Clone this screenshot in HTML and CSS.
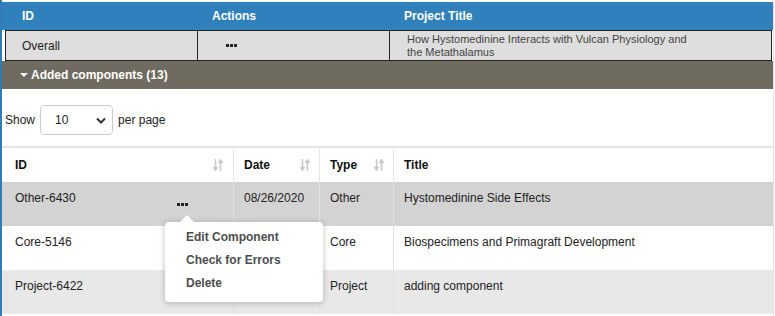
FILE: index.html
```html
<!DOCTYPE html>
<html lang="en">
<head>
    <meta charset="UTF-8">
    <title>Components</title>
    <link rel="stylesheet" href="styles.css">
</head>
<body>
    <div class="page">
        <div class="summary-head">
            <div class="head-cell">ID</div>
            <div class="head-cell">Actions</div>
            <div class="head-cell">Project Title</div>
        </div>
        <div class="summary-row">
            <div class="sum-cell">Overall</div>
            <div class="sum-cell sum-actions"><span class="dots"><i></i><i></i><i></i></span></div>
            <div class="sum-cell sum-title">How Hystomedinine Interacts with Vulcan Physiology and<br>the Metathalamus</div>
        </div>
        <div class="band"><span class="caret"></span>Added components (13)</div>

        <div class="length">
            <span>Show</span>
            <div class="select">
                <span>10</span>
                <svg width="10" height="7" viewBox="0 0 10 7"><path d="M1 1.5 L5 5.5 L9 1.5" fill="none" stroke="#333" stroke-width="2"/></svg>
            </div>
            <span>per page</span>
        </div>

        <table class="grid">
            <thead>
                <tr>
                    <th class="col-id"><div class="th-in">ID<svg class="sort" width="10" height="12" viewBox="0 0 10 12"><path d="M2.5 0 V10 M0.5 8 L2.5 11 L4.5 8 M7.5 12 V2 M5.5 4 L7.5 1 L9.5 4" fill="none" stroke="#c9c9c9" stroke-width="1.6"/></svg></div></th>
                    <th class="col-date"><div class="th-in">Date<svg class="sort" width="10" height="12" viewBox="0 0 10 12"><path d="M2.5 0 V10 M0.5 8 L2.5 11 L4.5 8 M7.5 12 V2 M5.5 4 L7.5 1 L9.5 4" fill="none" stroke="#c9c9c9" stroke-width="1.6"/></svg></div></th>
                    <th class="col-type"><div class="th-in">Type<svg class="sort" width="10" height="12" viewBox="0 0 10 12"><path d="M2.5 0 V10 M0.5 8 L2.5 11 L4.5 8 M7.5 12 V2 M5.5 4 L7.5 1 L9.5 4" fill="none" stroke="#c9c9c9" stroke-width="1.6"/></svg></div></th>
                    <th class="col-title"><div class="th-in">Title</div></th>
                </tr>
            </thead>
            <tbody>
                <tr class="row-hover">
                    <td>
                        <div class="id-cell">
                            <span>Other-6430</span>
                            <span class="dots-btn">
                                <span class="dots"><i></i><i></i><i></i></span>
                                <div class="popover">
                                    <div class="pop-item">Edit Component</div>
                                    <div class="pop-item">Check for Errors</div>
                                    <div class="pop-item">Delete</div>
                                </div>
                            </span>
                        </div>
                    </td>
                    <td>08/26/2020</td>
                    <td>Other</td>
                    <td>Hystomedinine Side Effects</td>
                </tr>
                <tr>
                    <td>Core-5146</td>
                    <td></td>
                    <td>Core</td>
                    <td>Biospecimens and Primagraft Development</td>
                </tr>
                <tr class="row-alt">
                    <td>Project-6422</td>
                    <td></td>
                    <td>Project</td>
                    <td>adding component</td>
                </tr>
            </tbody>
        </table>
    </div>
</body>
</html>
```

FILE: styles.css
```css
body {
    margin: 0;
    font-family: 'Liberation Sans', Arial, sans-serif;
    font-size: 12px;
    color: #222;
    background-color: #fff;
    overflow: hidden;
}
.page {
    width: 771px;
    min-height: 316px;
    padding-top: 2px;
    border-left: 2px solid #2f7cb6;
    border-right: 1px solid #e2e2e2;
}
.summary-head {
    display: grid;
    grid-template-columns: 195px 192px 1fr;
    height: 28px;
    align-items: center;
    background-color: #3080bc;
    color: #fff;
    font-weight: bold;
}
.head-cell {
    padding-left: 15px;
}
.head-cell:first-child {
    padding-left: 20px;
}
.summary-row {
    display: grid;
    grid-template-columns: 192px 192px 1fr;
    height: 31px;
    box-sizing: border-box;
    margin-left: 3px;
    margin-right: 1px;
    background-color: #dedede;
    border-top: 1px solid #222;
    border-bottom: 1px solid #222;
}
.sum-cell {
    display: flex;
    align-items: center;
    border-left: 1px solid #222;
    padding-left: 16px;
}
.sum-cell:last-child {
    border-right: 1px solid #222;
}
.sum-actions {
    padding-left: 28px;
}
.sum-title {
    display: block;
    padding: 2px 0 0 17px;
    font-size: 11px;
    line-height: 13px;
    color: #444;
}
.dots {
    display: inline-flex;
    gap: 1px;
}
.dots i {
    display: block;
    width: 3px;
    height: 3px;
    background-color: #222;
}
.band {
    height: 28px;
    display: flex;
    align-items: center;
    padding-left: 18px;
    background-color: #6f6b60;
    color: #fff;
    font-weight: bold;
}
.caret {
    display: inline-block;
    width: 0;
    height: 0;
    border-left: 4px solid transparent;
    border-right: 4px solid transparent;
    border-top: 4px solid #fff;
    margin-right: 3px;
}
.length {
    display: flex;
    align-items: center;
    gap: 5px;
    margin-top: 16px;
    padding-left: 3px;
}
.select {
    width: 73px;
    height: 30px;
    box-sizing: border-box;
    border: 1px solid #ccc;
    border-radius: 4px;
    display: flex;
    align-items: center;
    justify-content: space-between;
    padding: 0 6px 0 14px;
}
.grid {
    width: 100%;
    margin-top: 11px;
    border-collapse: collapse;
    border-top: 2px solid #e4e4e4;
}
.grid th {
    height: 34px;
    padding: 0;
    text-align: left;
    font-weight: bold;
    color: #111;
    border-left: 1px solid #e6e6e6;
}
.grid th:first-child,
.grid td:first-child {
    border-left: none;
}
.th-in {
    display: flex;
    align-items: center;
    justify-content: space-between;
    padding: 0 9px 0 10px;
}
.col-id .th-in {
    padding-left: 13px;
    padding-right: 10px;
}
.col-id {
    width: 231px;
}
.col-date {
    width: 85px;
}
.col-type {
    width: 73px;
}
.grid td {
    height: 44px;
    box-sizing: border-box;
    padding: 9px 10px 0;
    vertical-align: top;
    border-left: 1px solid #e2e2e2;
    line-height: 14px;
}
.grid td:first-child {
    padding-left: 13px;
}
.row-hover td {
    background-color: #d3d3d3;
}
.row-alt td {
    background-color: #e8e8e8;
}
.id-cell {
    display: flex;
    height: 14px;
}
.dots-btn {
    position: relative;
    margin-left: auto;
    margin-right: 35px;
    margin-top: 12px;
    height: 3px;
}
.dots-btn .dots {
    display: flex;
}
.popover {
    position: absolute;
    top: 19px;
    left: -12px;
    width: 158px;
    padding: 4px 0 7px;
    background-color: #fff;
    border-radius: 4px;
    box-shadow: 0 1px 6px rgba(0, 0, 0, 0.25);
    z-index: 10;
}
.popover::before {
    content: "";
    position: absolute;
    top: -7px;
    left: 15px;
    border-left: 7px solid transparent;
    border-right: 7px solid transparent;
    border-bottom: 7px solid #fff;
}
.pop-item {
    padding-left: 21px;
    line-height: 23px;
    font-weight: bold;
    color: #4d4d4d;
    white-space: nowrap;
}
```
